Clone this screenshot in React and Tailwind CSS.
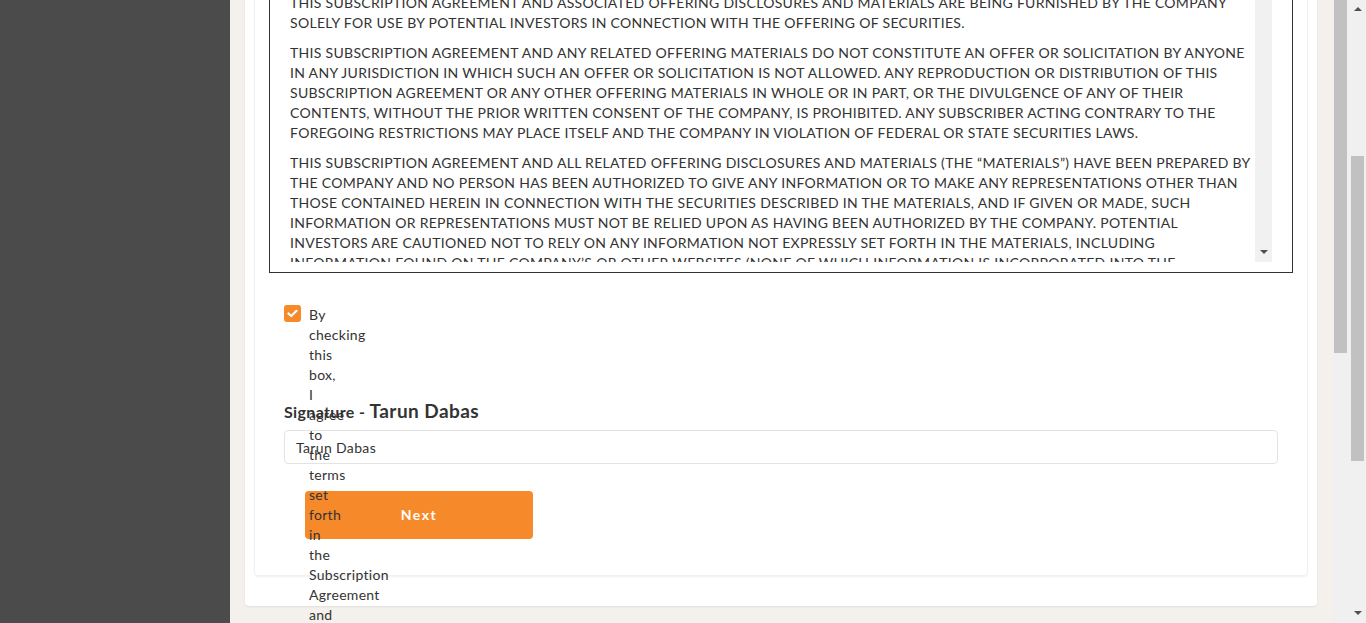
import React from 'react'

const paragraphs = [
  'THIS SUBSCRIPTION AGREEMENT AND ASSOCIATED OFFERING DISCLOSURES AND MATERIALS ARE BEING FURNISHED BY THE COMPANY SOLELY FOR USE BY POTENTIAL INVESTORS IN CONNECTION WITH THE OFFERING OF SECURITIES.',
  'THIS SUBSCRIPTION AGREEMENT AND ANY RELATED OFFERING MATERIALS DO NOT CONSTITUTE AN OFFER OR SOLICITATION BY ANYONE IN ANY JURISDICTION IN WHICH SUCH AN OFFER OR SOLICITATION IS NOT ALLOWED. ANY REPRODUCTION OR DISTRIBUTION OF THIS SUBSCRIPTION AGREEMENT OR ANY OTHER OFFERING MATERIALS IN WHOLE OR IN PART, OR THE DIVULGENCE OF ANY OF THEIR CONTENTS, WITHOUT THE PRIOR WRITTEN CONSENT OF THE COMPANY, IS PROHIBITED. ANY SUBSCRIBER ACTING CONTRARY TO THE FOREGOING RESTRICTIONS MAY PLACE ITSELF AND THE COMPANY IN VIOLATION OF FEDERAL OR STATE SECURITIES LAWS.',
  'THIS SUBSCRIPTION AGREEMENT AND ALL RELATED OFFERING DISCLOSURES AND MATERIALS (THE \u201cMATERIALS\u201d) HAVE BEEN PREPARED BY THE COMPANY AND NO PERSON HAS BEEN AUTHORIZED TO GIVE ANY INFORMATION OR TO MAKE ANY REPRESENTATIONS OTHER THAN THOSE CONTAINED HEREIN IN CONNECTION WITH THE SECURITIES DESCRIBED IN THE MATERIALS, AND IF GIVEN OR MADE, SUCH INFORMATION OR REPRESENTATIONS MUST NOT BE RELIED UPON AS HAVING BEEN AUTHORIZED BY THE COMPANY. POTENTIAL INVESTORS ARE CAUTIONED NOT TO RELY ON ANY INFORMATION NOT EXPRESSLY SET FORTH IN THE MATERIALS, INCLUDING INFORMATION FOUND ON THE COMPANY\u2019S OR OTHER WEBSITES (NONE OF WHICH INFORMATION IS INCORPORATED INTO THE MATERIALS).',
]

function ArrowUp() {
  return (
    <svg width="8" height="5" viewBox="0 0 8 5" className="block">
      <path d="M0 5 L4 1 L8 5 Z" fill="#505050" />
    </svg>
  )
}

function ArrowDown() {
  return (
    <svg width="8" height="5" viewBox="0 0 8 5" className="block">
      <path d="M0 0 L8 0 L4 4 Z" fill="#505050" />
    </svg>
  )
}

export default function App() {
  return (
    <div className="flex h-[623px] overflow-hidden font-['Lato',sans-serif] text-[#333]">
      <aside className="w-[230px] shrink-0 bg-[#4b4b4b]" />

      <div className="flex flex-1 bg-[#f4f1ed]">
        <main className="flex-1 px-[15px]">
          <div className="-mt-[34px] bg-white rounded-[4px] shadow-[0_1px_2px_rgba(0,0,0,0.08)] p-[9px] pb-[30px]">
            <div className="border border-[#f0f0f0] rounded-[4px] shadow-[0_1px_2px_rgba(0,0,0,0.06)] px-[14px] pt-[14px] pb-[36px]">
              {/* agreement text box */}
              <div className="flex border border-[#333] pt-[9px] pb-[10px] px-[20px]">
                <div className="flex-1 h-[262px] overflow-hidden">
                  <div className="-mt-[7px] text-[14px] leading-[20px] tracking-[0.3px]">
                    {paragraphs.map((p, i) => (
                      <p key={i} className={i > 0 ? 'mt-[10px]' : ''}>{p}</p>
                    ))}
                  </div>
                </div>
                <div className="w-[17px] h-[262px] bg-[#f1f1f1] flex flex-col justify-end items-center pb-[7px]">
                  <ArrowDown />
                </div>
              </div>

              {/* form */}
              <div className="px-[15px] pt-[31px]">
                <div className="flex h-[93px] items-start">
                  <div className="mt-[1px] w-[17px] h-[17px] shrink-0 rounded-[3px] bg-[#f6892a] grid place-items-center">
                    <svg width="11" height="9" viewBox="0 0 11 9">
                      <path d="M1.5 4.5 L4.2 7 L9.5 1.8" fill="none" stroke="#fff" strokeWidth="2.2" strokeLinecap="round" strokeLinejoin="round" />
                    </svg>
                  </div>
                  <label className="relative z-10 mt-[1px] ml-[8px] w-0 min-w-0 shrink-0 text-[14px] leading-[20px] tracking-[0.3px]">
                    By checking this box, I agree to the terms set forth in the Subscription Agreement and acknowledge that I have read and understood the offering materials.
                  </label>
                </div>

                <h3 className="font-bold text-[19px] leading-[28px] mb-[4px] tracking-[0.45px]">
                  <span className="text-[16px] tracking-[0.35px]">Signature - </span>Tarun Dabas
                </h3>

                <div className="h-[34px] border border-[#e3e3e3] rounded-[4px] pl-[11px] flex items-center text-[14px] tracking-[0.35px]">
                  Tarun Dabas
                </div>

                <div className="mt-[27px] ml-[21px] w-[228px] h-[48px] rounded-[4px] bg-[#f6892a] flex items-center justify-center text-white font-bold text-[14px] tracking-[1.5px]">
                  <span className="-mt-[1px]">Next</span>
                </div>
              </div>
            </div>
          </div>
        </main>

        {/* inner scroll bar */}
        <div className="w-[17px] shrink-0 bg-[#f0f0f0] flex justify-center">
          <div className="w-[13px] h-[353px] bg-[#c1c1c1]" />
        </div>
      </div>

      {/* page scroll bar */}
      <div className="w-[17px] shrink-0 bg-[#f0f0f0] flex flex-col items-center">
        <div className="h-[17px] flex items-center justify-center"><ArrowUp /></div>
        <div className="mt-[139px] w-[13px] h-[305px] bg-[#c1c1c1]" />
        <div className="flex-1" />
        <div className="h-[17px] flex items-center justify-center pb-[3px]"><ArrowDown /></div>
      </div>
    </div>
  )
}
